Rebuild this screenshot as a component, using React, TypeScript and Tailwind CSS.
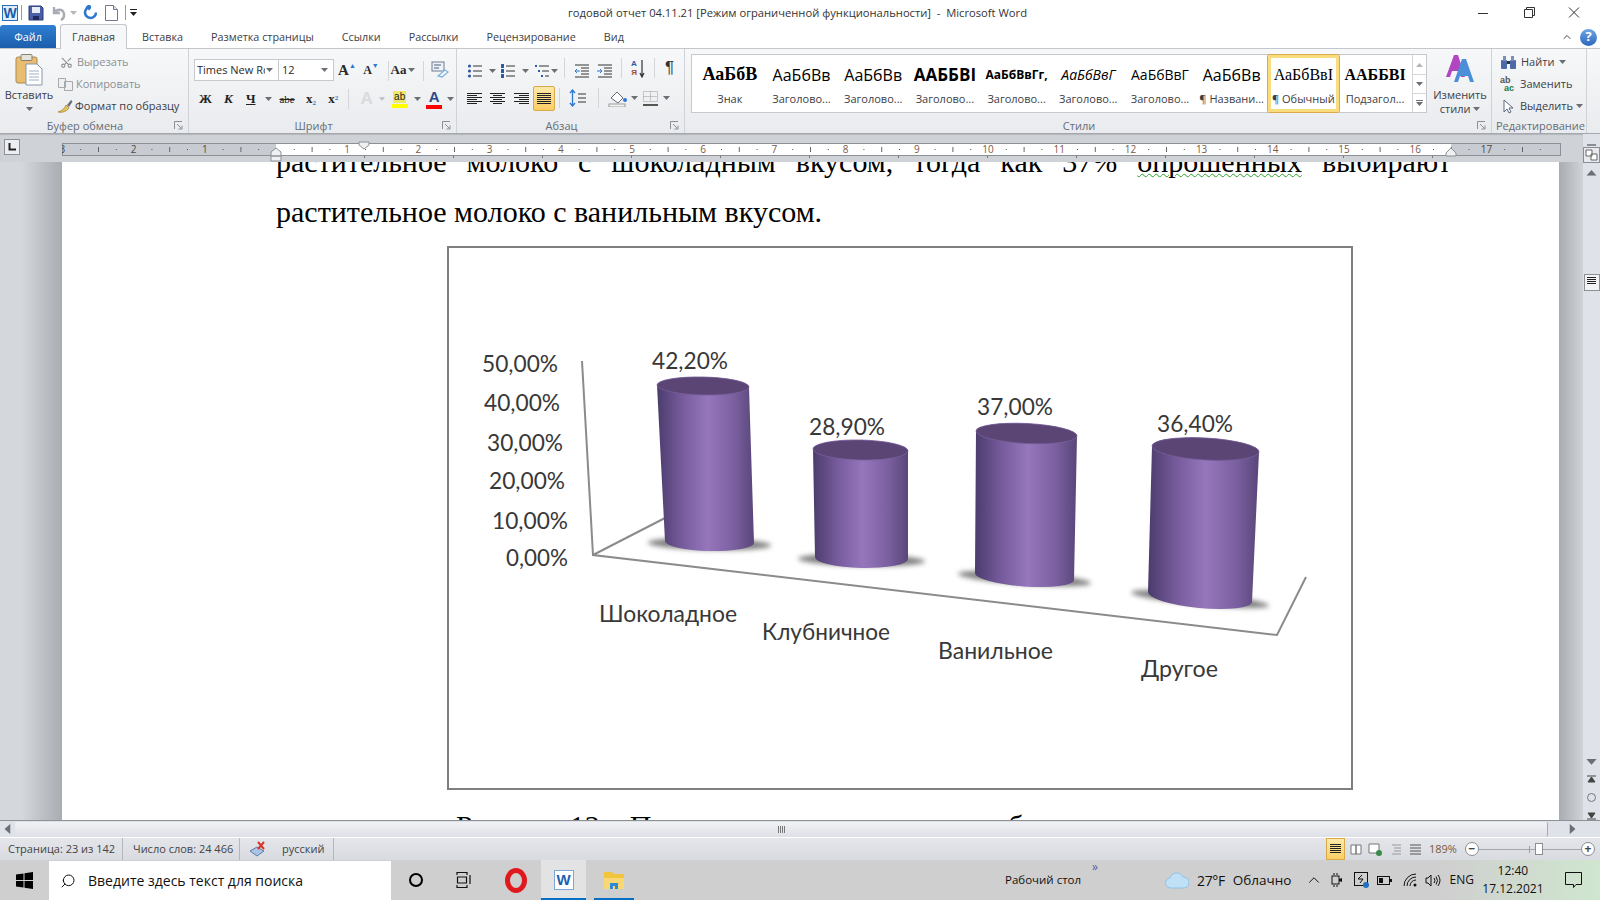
import React from 'react';
import { Scissors, Search, ChevronUp } from 'lucide-react';

const Caret = ({ className = '' }: { className?: string }) => (
  <svg width="7" height="4" viewBox="0 0 7 4" className={className}>
    <path d="M0 0h7L3.5 4z" fill="#6b6f75" />
  </svg>
);

const Launcher = () => (
  <svg width="9" height="9" viewBox="0 0 9 9" className="absolute right-[5px] bottom-[3px]">
    <path d="M0.5 8V0.5H8M3 3l4.5 4.5M8 4.5V8H4.5" fill="none" stroke="#8a8f96" />
  </svg>
);

const Sep = ({ className = '' }: { className?: string }) => <div className={`w-px bg-[#d3d5d9] ${className}`} />;

const Lines = ({ rows, w = 14 }: { rows: [number, number][]; w?: number }) => (
  <svg width={w} height="13" viewBox={`0 0 ${w} 13`}>
    {rows.map(([x, l], i) => (
      <rect key={i} x={x} y={i * 2 + 1} width={l} height="1" fill="#222" />
    ))}
  </svg>
);

const Group = ({ label, className, children }: { label: string; className: string; children: React.ReactNode }) => (
  <div className={`relative flex flex-col border-r border-[#cfd2d6] ${className}`}>
    <div className="h-[69px] overflow-visible">{children}</div>
    <div className="h-[16px] pr-[18px] text-center text-[11px] leading-[17px] text-[#666c75]">{label}</div>
    <Launcher />
  </div>
);

const TitleBar = () => (
  <div className="flex h-[25px] items-center bg-white text-[#333]">
    <div className="ml-[2px] flex h-[16px] w-[16px] items-center justify-center border border-[#2a6fb8] bg-[#dfeefb]">
      <span className="font-['Liberation_Sans',sans-serif] text-[14px] leading-none font-bold text-[#1d5aa8]">W</span>
    </div>
    <div className="ml-[3px] h-[15px] w-px bg-[#9a9a9a]" />
    <svg width="16" height="16" viewBox="0 0 16 16" className="ml-[6px]">
      <path d="M1 1h12l2 2v12H1z" fill="#4b5fa8" stroke="#2b3a78" />
      <rect x="4" y="2" width="8" height="6" fill="#e8ecf6" />
      <rect x="5" y="11" width="6" height="4" fill="#1f2a5c" />
    </svg>
    <svg width="16" height="16" viewBox="0 0 16 16" className="ml-[7px]">
      <path d="M3 2v6h6M3 8c2-4 9-5 10 1 .4 3-1 5-3 6" fill="none" stroke="#a9adb3" strokeWidth="2.4" />
    </svg>
    <Caret className="ml-[3px] opacity-50" />
    <svg width="14" height="15" viewBox="0 0 14 15" className="ml-[6px]">
      <path d="M13 7.5A5.5 5.5 0 1 1 8 2H5M7 0 4.500 2 7 4.500" fill="none" stroke="#2c78d0" strokeWidth="2.600" />
    </svg>
    <svg width="13" height="16" viewBox="0 0 13 16" className="ml-[8px]">
      <path d="M.5.500h8l4 4v11H.5z" fill="#fff" stroke="#6d7a8c" />
      <path d="M8.500.500v4h4" fill="#dbe3ee" stroke="#6d7a8c" />
    </svg>
    <div className="ml-[7px] h-[15px] w-px bg-[#9a9a9a]" />
    <svg width="8" height="8" viewBox="0 0 8 8" className="ml-[4px]">
      <rect width="7" height="1" y="0" fill="#222" />
      <path d="M0 3h7L3.500 7z" fill="#222" />
    </svg>
    <div className="flex-1 pt-[1px] pl-[430px] text-[11.2px] whitespace-pre">годовой отчет 04.11.21 [Режим ограниченной функциональности]  -  Microsoft Word</div>
    <svg width="104" height="14" viewBox="0 0 104 14" className="mr-[18px]">
      <path d="M0 7.500h10" stroke="#333" />
      <path d="M46.500 3.500h8v8h-8zM48.500 3.500v-2h8v8h-2" fill="none" stroke="#333" />
      <path d="M91 1.500l10 10M101 1.500l-10 10" stroke="#333" />
    </svg>
  </div>
);

const Tabs = () => (
  <div className="relative flex h-[24px] items-end bg-white text-[10.800px] text-[#3c4046]">
    <div className="flex h-[24px] w-[56px] items-center justify-center rounded-t-[3px] bg-gradient-to-b from-[#2f7fd3] to-[#1c5caa] text-white">Файл</div>
    <div className="z-10 ml-[4px] flex h-[25px] w-[67px] items-center justify-center rounded-t-[3px] border border-b-0 border-[#c3c6cb] bg-[#f6f7f8]">Главная</div>
    <div className="flex h-[24px] items-center gap-[28px] pl-[15px]">
      <span>Вставка</span>
      <span>Разметка страницы</span>
      <span>Ссылки</span>
      <span>Рассылки</span>
      <span>Рецензирование</span>
      <span>Вид</span>
    </div>
    <div className="ml-auto flex h-[24px] items-center gap-[7px] pr-[3px]">
      <ChevronUp size={12} color="#444" />
      <div className="flex h-[17px] w-[17px] items-center justify-center rounded-full bg-gradient-to-b from-[#6fa6e6] to-[#2b66bd] text-[13px] font-bold text-white">?</div>
    </div>
    <div className="absolute right-0 bottom-0 left-0 h-px bg-[#c3c6cb]" />
  </div>
);

const ClipboardGroup = () => (
  <Group label="Буфер обмена" className="w-[189px]">
    <div className="flex h-full">
      <div className="flex w-[58px] flex-col items-center pt-[5px]">
        <svg width="28" height="32" viewBox="0 0 28 32">
          <rect x="1" y="3" width="21" height="26" rx="2" fill="#e9bd70" stroke="#a88a52" />
          <rect x="6" y="0.500" width="11" height="6" rx="1" fill="#e6e3da" stroke="#85806f" />
          <path d="M11 10h11l5 5v16H11z" fill="#fff" stroke="#8b97a8" />
          <path d="M14 17h10M14 20h10M14 23h10M14 26h10" stroke="#9fb0c6" />
        </svg>
        <span className="mt-[1px] text-[11px] leading-[16px] text-[#3c4046]">Вставить</span>
        <Caret className="mt-[4px]" />
      </div>
      <div className="flex flex-col pt-[2px] text-[11px] leading-[22px]">
        <div className="flex items-center text-[#8d9096]">
          <Scissors size={13} color="#8d9096" className="mr-[4px] ml-[2px] -rotate-90" />
          Вырезать
        </div>
        <div className="flex items-center text-[#8d9096]">
          <svg width="15" height="13" viewBox="0 0 15 13" className="mr-[3px]">
            <path d="M.5.500h7v9h-7zM6.500 3.500h8v9h-8z" fill="#eef0f2" stroke="#a6a9ae" />
          </svg>
          Копировать
        </div>
        <div className="flex items-center text-[#3c4046]">
          <svg width="16" height="14" viewBox="0 0 16 14" className="mr-[2px] -ml-[1px]">
            <path d="M1 13c4-1 7-4 8-7l3 3c-2 3-6 5-11 4z" fill="#e6c35c" stroke="#9a7c2e" strokeWidth=".7" />
            <path d="M10 6l4-5 1.500 1.500L12 8z" fill="#6a6f78" />
          </svg>
          Формат по образцу
        </div>
      </div>
    </div>
  </Group>
);

const FontGroup = () => (
  <Group label="Шрифт" className="w-[268px]">
    <div className="flex h-[32px] items-end pl-[5px] text-[#2b2b2b]">
      <div className="flex h-[22px] w-[85px] items-center justify-between border border-[#c6c9cd] bg-white pr-[5px] pl-[2px] text-[11px]">
        <span className="w-[68px] overflow-hidden whitespace-nowrap">Times New Ro</span>
        <Caret />
      </div>
      <div className="flex h-[22px] w-[55px] items-center justify-between border border-l-0 border-[#c6c9cd] bg-white pr-[5px] pl-[3px] text-[11px]">
        12
        <Caret />
      </div>
      <div className="flex h-[22px] w-[26px] items-center justify-center font-['Liberation_Serif',serif] text-[15px] font-bold">A<span className="-mt-[8px] text-[7px] text-[#2c78d0]">▲</span></div>
      <div className="flex h-[22px] w-[22px] items-center justify-center font-['Liberation_Serif',serif] text-[12px] font-bold">A<span className="-mt-[8px] text-[7px] text-[#2c78d0]">▼</span></div>
      <Sep className="ml-[6px] h-[20px]" />
      <div className="flex h-[22px] w-[28px] items-center justify-center gap-[2px] font-['Liberation_Serif',serif] text-[13px] font-bold">Aa<Caret /></div>
      <Sep className="ml-[6px] h-[20px]" />
      <svg width="18" height="17" viewBox="0 0 18 17" className="mb-[3px] ml-[7px]">
        <rect x="1" y="1" width="12" height="9" fill="#eef3fa" stroke="#6c7a8e" />
        <path d="M3 4h7M3 7h5" stroke="#4a5a70" />
        <path d="M7 15l7-6 3 2-6 5z" fill="#fff" stroke="#7fb2dc" strokeWidth="1.300" />
      </svg>
    </div>
    <div className="mt-[7px] flex h-[22px] items-center pl-[5px] font-['Liberation_Serif',serif] text-[13px] font-bold text-[#222]">
      <span className="w-[23px] text-center">Ж</span>
      <span className="w-[23px] text-center italic">К</span>
      <span className="w-[22px] text-center underline">Ч</span>
      <span className="flex w-[14px] justify-center"><Caret /></span>
      <span className="w-[23px] text-center text-[11px] font-normal line-through">abe</span>
      <span className="w-[25px] text-center">x<sub className="text-[7px] text-[#2c78d0]">2</sub></span>
      <span className="w-[20px] text-center">x<sup className="text-[7px] text-[#2c78d0]">2</sup></span>
      <Sep className="mx-[5px] h-[20px]" />
      <span className="w-[25px] text-center font-['Liberation_Sans',sans-serif] text-[17px] text-[#d9dbde]">A</span>
      <span className="flex w-[6px] justify-center opacity-40"><Caret /></span>
      <span className="ml-[6px] flex w-[17px] flex-col items-center font-['Liberation_Sans',sans-serif] text-[10px] leading-[12px] font-normal">
        <span className="bg-[#efe96a] px-[1px]">ab</span>
        <span className="mt-[1px] h-[4px] w-[16px] bg-[#ffff00]" />
      </span>
      <span className="ml-[3px] flex w-[13px] justify-center"><Caret /></span>
      <span className="ml-[2px] flex w-[16px] flex-col items-center font-['Liberation_Sans',sans-serif] text-[15px] leading-[14px] text-[#2a4a8a]">
        A
        <span className="mt-[1px] h-[4px] w-[16px] bg-[#ff0000]" />
      </span>
      <span className="ml-[3px] flex w-[11px] justify-center"><Caret /></span>
    </div>
  </Group>
);

const ListIcon = ({ kind }: { kind: 'b' | 'n' | 'm' }) => (
  <svg width="16" height="14" viewBox="0 0 16 14">
    {kind === 'm' ? (
      <>
        <path d="M5 2h10M8 7h7M11 12h4" stroke="#333" />
        <rect x="1" y="1" width="2" height="2" fill="#2c5aa8" />
        <rect x="4" y="6" width="2" height="2" fill="#2c5aa8" />
        <rect x="7" y="11" width="2" height="2" fill="#2c5aa8" />
      </>
    ) : (
      <>
        <path d="M6 2h9M6 7h9M6 12h9" stroke="#333" />
        {[2, 7, 12].map((y) =>
          kind === 'b' ? (
            <circle key={y} cx="2.500" cy={y} r="1.600" fill="#2c5aa8" />
          ) : (
            <rect key={y} x="1" y={y - 2} width="3" height="4" fill="#2c5aa8" />
          )
        )}
      </>
    )}
  </svg>
);

const IndentIcon = ({ dir }: { dir: 'l' | 'r' }) => (
  <svg width="16" height="14" viewBox="0 0 16 14">
    <path d="M1 1h14M7 4h8M7 7h8M7 10h8M1 13h14" stroke="#333" />
    {dir === 'l' ? (
      <path d="M6 7H1l2-2M1 7l2 2" fill="none" stroke="#2c78d0" />
    ) : (
      <path d="M0 7h5L3 5M5 7 3 9" fill="none" stroke="#2c78d0" />
    )}
  </svg>
);

const ParagraphGroup = () => (
  <Group label="Абзац" className="w-[228px]">
    <div className="flex h-[32px] items-end pb-[3px] pl-[10px]">
      <ListIcon kind="b" />
      <Caret className="mb-[5px] ml-[6px]" />
      <div className="ml-[4px]"><ListIcon kind="n" /></div>
      <Caret className="mb-[5px] ml-[6px]" />
      <div className="ml-[5px]"><ListIcon kind="m" /></div>
      <Caret className="mb-[5px] ml-[1px]" />
      <Sep className="ml-[6px] h-[20px]" />
      <div className="ml-[9px]"><IndentIcon dir="l" /></div>
      <div className="ml-[7px]"><IndentIcon dir="r" /></div>
      <Sep className="ml-[8px] h-[20px]" />
      <div className="ml-[7px] flex h-[19px] w-[10px] flex-col text-center font-['Liberation_Sans',sans-serif] text-[8px] leading-[9px] font-bold">
        <span className="text-[#2c5aa8]">A</span>
        <span className="text-[#a04a3a]">Я</span>
      </div>
      <svg width="6" height="18" viewBox="0 0 6 18">
        <path d="M3 0v16M1 13l2 4 2-4" fill="none" stroke="#333" strokeWidth="1.200" />
      </svg>
      <Sep className="ml-[9px] h-[20px]" />
      <span className="ml-[10px] font-['Liberation_Sans',sans-serif] text-[17px] leading-[20px] text-[#333]">¶</span>
    </div>
    <div className="mt-[4px] flex h-[26px] items-center pl-[10px]">
      <Lines w={15} rows={[[0, 15], [0, 10], [0, 15], [0, 10], [0, 15], [0, 10]]} />
      <div className="ml-[8px]"><Lines w={15} rows={[[0, 15], [3, 9], [0, 15], [3, 9], [0, 15], [3, 9]]} /></div>
      <div className="ml-[9px]"><Lines w={15} rows={[[0, 15], [5, 10], [0, 15], [5, 10], [0, 15], [5, 10]]} /></div>
      <div className="ml-[4px] flex h-[25px] w-[22px] items-center justify-center rounded-[2px] border border-[#d9a94a] bg-gradient-to-b from-[#fde9a8] to-[#fbce62]">
        <Lines w={14} rows={[[0, 14], [0, 14], [0, 14], [0, 14], [0, 14], [0, 14]]} />
      </div>
      <Sep className="ml-[4px] h-[20px]" />
      <svg width="22" height="18" viewBox="0 0 22 18" className="ml-[9px]">
        <path d="M3.500 1v16M1 4l2.500-3L6 4M1 14l2.500 3L6 14" fill="none" stroke="#2c78d0" strokeWidth="1.300" />
        <path d="M9 5h8M9 9h8M9 13h8" stroke="#333" />
      </svg>
      <Sep className="ml-[7px] h-[20px]" />
      <svg width="22" height="18" viewBox="0 0 22 18" className="ml-[9px]">
        <path d="M3 9l6-6 6 6-5 5z" fill="#fff" stroke="#5f6b7a" />
        <circle cx="17" cy="11" r="2" fill="#2c78d0" />
        <rect x="1" y="15" width="16" height="3" fill="#f4f4f4" stroke="#9a9a9a" />
      </svg>
      <Caret className="ml-[1px]" />
      <svg width="16" height="15" viewBox="0 0 16 15" className="ml-[5px]">
        <path d="M.5.500h14v10h-14zM7.500.500v10M.5 5.500h14" fill="none" stroke="#9a9a9a" strokeDasharray="1 1" />
        <path d="M0 14h15" stroke="#222" strokeWidth="1.500" />
      </svg>
      <Caret className="ml-[4px]" />
    </div>
  </Group>
);

const styles: { sample: string; label: string; cls: string }[] = [
  { sample: 'АаБбВ', label: 'Знак', cls: "font-['Liberation_Serif',serif] text-[18px] font-bold" },
  { sample: 'АаБбВв', label: 'Заголово...', cls: 'text-[16px]' },
  { sample: 'АаБбВв', label: 'Заголово...', cls: 'text-[16px]' },
  { sample: 'ААББВI', label: 'Заголово...', cls: 'text-[17px] font-bold' },
  { sample: 'АаБбВвГг,', label: 'Заголово...', cls: 'text-[12px] font-bold' },
  { sample: 'АаБбВвГ', label: 'Заголово...', cls: 'text-[14px] italic' },
  { sample: 'АаБбВвГ', label: 'Заголово...', cls: 'text-[14px]' },
  { sample: 'АаБбВв', label: '¶ Названи...', cls: 'text-[16px]' },
  { sample: 'АаБбВвI', label: '¶ Обычный', cls: "font-['Liberation_Serif',serif] text-[16px]" },
  { sample: 'ААББВI', label: 'Подзагол...', cls: "font-['Liberation_Serif',serif] text-[16px] font-bold" },
];

const StylesGroup = () => (
  <Group label="Стили" className="w-[807px]">
    <div className="flex h-full">
      <div className="mt-[5px] ml-[6px] flex h-[59px] w-[736px] border border-[#c6c9cd] bg-white pl-[2px]">
        {styles.map((s, i) => (
          <div
            key={i}
            className={`flex w-[71.700px] flex-col items-center overflow-hidden ${
              i === 8 ? 'rounded-[2px] shadow-[inset_0_0_0_3px_#f8dc7e,0_0_0_1px_#dca94c]' : ''
            }`}
          >
            <div className={`flex h-[36px] items-center px-[3px] pt-[3px] whitespace-nowrap text-black ${s.cls}`}>{s.sample}</div>
            <div className="text-[11px] leading-[16px] whitespace-nowrap text-[#3c4046]">{s.label}</div>
          </div>
        ))}
        <div className="ml-auto flex w-[14px] flex-col border-l border-[#d4d6da] text-[#9a9ea4]">
          <div className="flex h-[19px] items-center justify-center"><Caret className="rotate-180 opacity-50" /></div>
          <div className="flex h-[20px] items-center justify-center border-y border-[#d4d6da]"><Caret /></div>
          <div className="flex h-[18px] flex-col items-center justify-center gap-[1px]"><div className="h-px w-[7px] bg-[#6b6f75]" /><Caret /></div>
        </div>
      </div>
      <div className="ml-[3px] flex w-[60px] flex-col items-center pt-[4px]">
        <svg width="32" height="31" viewBox="0 0 32 31">
          <path d="M2 24 10 2h4l7 22h-4l-2-6H8l-2 6z" fill="#b146c0" />
          <path d="M10 29 18 6h4l8 23h-4l-2-6h-8l-2 6z" fill="#4d8ed8" />
        </svg>
        <span className="mt-[4px] text-center text-[11px] leading-[14px] text-[#3c4046]">
          Изменить
          <br />
          стили <Caret className="mb-[2px] inline" />
        </span>
      </div>
    </div>
  </Group>
);

const EditingGroup = () => (
  <div className="relative flex w-[95px] flex-col border-r border-[#cfd2d6]">
    <div className="flex h-[69px] flex-col pt-[2px] pl-[8px] text-[11px] leading-[22px] text-[#3c4046]">
      <div className="flex items-center gap-[4px]">
        <svg width="17" height="15" viewBox="0 0 17 15">
          <rect x="1" y="5" width="6" height="9" rx="1" fill="#4a6aa8" />
          <rect x="10" y="5" width="6" height="9" rx="1" fill="#4a6aa8" />
          <rect x="3" y="1" width="3" height="5" fill="#7d8fb5" />
          <rect x="11" y="1" width="3" height="5" fill="#7d8fb5" />
          <rect x="7" y="6" width="3" height="3" fill="#333" />
        </svg>
        Найти
        <Caret className="ml-[1px]" />
      </div>
      <div className="flex items-center gap-[3px]">
        <span className="flex h-[17px] w-[17px] flex-col font-['Liberation_Sans',sans-serif] text-[9px] leading-[8px] font-bold">
          <span className="text-[#555]">ab</span>
          <span className="pl-[4px] text-[#1a7a4a]">ac</span>
        </span>
        Заменить
      </div>
      <div className="flex items-center gap-[4px]">
        <svg width="16" height="15" viewBox="0 0 16 15">
          <path d="M4 1v12l3-3 2 4 2-1-2-4h4z" fill="#fff" stroke="#5a6a80" />
        </svg>
        Выделить
        <Caret className="-ml-[1px]" />
      </div>
    </div>
    <div className="h-[16px] pl-[3px] text-center text-[11px] leading-[17px] whitespace-nowrap text-[#666c75]">Редактирование</div>
  </div>
);

const Ribbon = () => (
  <div className="flex h-[85px] border-b border-[#a4a7ac] bg-gradient-to-b from-[#f7f8f9] to-[#e9ebee]">
    <ClipboardGroup />
    <FontGroup />
    <ParagraphGroup />
    <StylesGroup />
    <EditingGroup />
  </div>
);

const unit = 71.2;
const zero = 214;
const rulerNums = Array.from({ length: 21 }, (_, i) => i - 3);

const Ruler = () => (
  <div className="flex h-[28px] shrink-0 items-start bg-[#cfd2d7] shadow-[inset_0_1px_1px_#b3b6bb]">
    <div className="mt-[5px] ml-[4px] flex h-[16px] w-[16px] items-center justify-center border border-[#8c9096] bg-[#eceef1]">
      <svg width="8" height="8" viewBox="0 0 8 8"><path d="M1.500 0v6.500H8" fill="none" stroke="#222" strokeWidth="2" /></svg>
    </div>
    <svg width="1510" height="28" viewBox="0 0 1510 28" className="ml-[42px] font-['Open_Sans',sans-serif]">
      <rect x=".5" y="9.500" width="1498" height="12" fill="#c8ccd2" stroke="#8d9196" />
      <rect x={zero} y="10" width="1175" height="11" fill="#fff" />
      {rulerNums.map((n) => {
        const x = zero + n * unit;
        return (
          <g key={n}>
            {n !== 0 && n <= 17 && (
              <text x={x} y="19" textAnchor="middle" fontSize="10" fill={n > 0 && n < 17 ? '#7a5a4a' : '#4a4a4a'}>
                {Math.abs(n)}
              </text>
            )}
            <rect x={x + unit / 4} y="15" width="1" height="1" fill="#555" />
            <rect x={x + unit / 2} y="13" width="1" height="5" fill="#666" />
            <rect x={x + (unit * 3) / 4} y="15" width="1" height="1" fill="#555" />
          </g>
        );
      })}
      {[0, 1, 2, 3, 4, 5, 6, 7, 8, 9, 10, 11, 12].map((i) => (
        <rect key={i} x={302 + i * 89} y="22" width="1" height="2" fill="#777" />
      ))}
      <path d="M297 8h10v3l-5 4-5-4z" fill="#eef0f2" stroke="#8d9196" />
      <path d="M209 22v-4l5-4 5 4v4zM209 22h10v5h-10z" fill="#eef0f2" stroke="#8d9196" />
      <path d="M1384 22v-3l5-5 5 5v3z" fill="#eef0f2" stroke="#8d9196" />
    </svg>
  </div>
);

type Pt = [number, number];

const Cylinder = ({ tl, tr, bl, br, ry, id }: { tl: Pt; tr: Pt; bl: Pt; br: Pt; ry: number; id: string }) => {
  const rx = Math.hypot(tr[0] - tl[0], tr[1] - tl[1]) / 2;
  const rot = (Math.atan2(tr[1] - tl[1], tr[0] - tl[0]) * 180) / Math.PI;
  const rxb = Math.hypot(br[0] - bl[0], br[1] - bl[1]) / 2;
  const rotb = (Math.atan2(br[1] - bl[1], br[0] - bl[0]) * 180) / Math.PI;
  const cx = (bl[0] + br[0]) / 2;
  const cy = (bl[1] + br[1]) / 2 + 2;
  return (
    <g>
      <ellipse cx={cx} cy={cy} rx={rxb + 17} ry={6} transform={`rotate(${rotb} ${cx} ${cy})`} fill="#555" opacity=".75" filter="url(#soft)" />
      <linearGradient id={id} x1="0" x2="1" y1="0" y2="0">
        <stop offset="0" stopColor="#4b3c6c" />
        <stop offset=".25" stopColor="#755a9b" />
        <stop offset=".52" stopColor="#9676bc" />
        <stop offset=".8" stopColor="#7a5f9f" />
        <stop offset="1" stopColor="#584679" />
      </linearGradient>
      <path d={`M${tl} L${bl} A${rxb} ${ry} ${rotb} 0 0 ${br} L${tr} A${rx} ${ry} ${rot} 0 0 ${tl}Z`} fill={`url(#${id})`} />
      <path d={`M${tl} A${rx} ${ry} ${rot} 0 1 ${tr} A${rx} ${ry} ${rot} 0 1 ${tl}Z`} fill="#5a4574" stroke="#775f9a" strokeWidth=".8" />
    </g>
  );
};

const labelText: { x: number; y: number; t: string; w: number }[] = [
  { x: 482, y: 372, t: '50,00%', w: 76 },
  { x: 484, y: 411, t: '40,00%', w: 76 },
  { x: 487, y: 451, t: '30,00%', w: 76 },
  { x: 489, y: 489, t: '20,00%', w: 76 },
  { x: 492, y: 529, t: '10,00%', w: 76 },
  { x: 506, y: 566, t: '0,00%', w: 62 },
  { x: 652, y: 369, t: '42,20%', w: 76 },
  { x: 809, y: 435, t: '28,90%', w: 76 },
  { x: 977, y: 415, t: '37,00%', w: 76 },
  { x: 1157, y: 432, t: '36,40%', w: 76 },
  { x: 599, y: 622, t: 'Шоколадное', w: 138 },
  { x: 762, y: 640, t: 'Клубничное', w: 128 },
  { x: 938, y: 659, t: 'Ванильное', w: 115 },
  { x: 1141, y: 677, t: 'Другое', w: 77 },
];

const Chart = () => (
  <svg viewBox="449 249 902 538" className="h-full w-full font-['Lato',sans-serif]">
    <defs>
      <filter id="soft" x="-30%" y="-80%" width="160%" height="260%">
        <feGaussianBlur stdDeviation="2.500" />
      </filter>
    </defs>
    <path d="M582 361 593 555 1277 635 1306 577M593 555 665 518" fill="none" stroke="#8b8b8b" strokeWidth="2" />
    <Cylinder id="c1" tl={[657, 385]} tr={[749, 387]} bl={[665, 541]} br={[754, 543]} ry={9} />
    <Cylinder id="c2" tl={[813, 449]} tr={[908, 451]} bl={[815, 557]} br={[908, 559]} ry={10} />
    <Cylinder id="c3" tl={[976, 431]} tr={[1077, 436]} bl={[975, 573]} br={[1074, 580]} ry={10} />
    <Cylinder id="c4" tl={[1152, 446]} tr={[1259, 452]} bl={[1148, 592]} br={[1252, 602]} ry={11} />
    {labelText.map((l) => (
      <text key={l.t} x={l.x} y={l.y} fontSize="23" fill="#383838" textLength={l.w} lengthAdjust="spacingAndGlyphs">
        {l.t}
      </text>
    ))}
  </svg>
);

const Page = () => (
  <div className="min-w-0 flex-1 overflow-hidden bg-white pr-[108px] pl-[214px] font-['Liberation_Serif',serif] text-[30px] leading-[50px] text-black">
    <div className="-mt-[25px] whitespace-nowrap [text-align-last:justify] [text-align:justify]">
      растительное молоко с шоколадным вкусом, тогда как 37% <span className="underline decoration-[#2aa02a] decoration-wavy decoration-1">опрошенных</span> выбирают
    </div>
    <div className="whitespace-nowrap">растительное молоко с ванильным вкусом.</div>
    <div className="mt-[9px] ml-[171px] h-[544px] w-[906px] border-2 border-[#7f7f7f] bg-white">
      <Chart />
    </div>
    <div className="mt-[11px] ml-[180px] whitespace-nowrap">Рисунок 12 – Предпочтения вкусов у потребителя</div>
  </div>
);

const VScroll = () => (
  <div className="flex w-[17px] shrink-0 flex-col items-center bg-[#dfe2e9]">
    <div className="mt-[10px] h-[2px] w-[9px] bg-[#8a8e94]" />
    <div className="mt-px flex h-[16px] w-[17px] items-center justify-center border border-[#8a8e94] bg-[#e7e9ee]">
      <svg width="13" height="12" viewBox="0 0 13 12">
        <path d="M1 1h6v6H1zM6 5h6v6H6z" fill="#fff" stroke="#666" />
      </svg>
    </div>
    <Caret className="mt-[8px] scale-150 rotate-180" />
    <div className="mt-[100px] flex h-[17px] w-[16px] items-center justify-center border border-[#8d9196] bg-[#f2f3f5]">
      <Lines w={9} rows={[[0, 9], [0, 9], [0, 9], [0, 9], [0, 0], [0, 0]]} />
    </div>
    <Caret className="mt-[469px] scale-150" />
    <div className="mt-[11px] flex flex-col items-center gap-[9px] text-[#555]">
      <svg width="9" height="9" viewBox="0 0 9 9"><path d="M0 1h9M1 7h7L4.500 2z" stroke="#444" fill="#444" /></svg>
      <div className="h-[9px] w-[9px] rounded-full border border-[#777]" />
      <svg width="9" height="9" viewBox="0 0 9 9"><path d="M0 8h9M1 2h7L4.500 7z" stroke="#444" fill="#444" /></svg>
    </div>
  </div>
);

const HScroll = () => (
  <div className="flex h-[17px] shrink-0 items-center border-t border-[#8d9196] bg-[#dfe2e9]">
    <Caret className="ml-[4px] scale-150 rotate-90" />
    <div className="ml-[4px] flex h-[15px] w-[1533px] items-center justify-center rounded-[2px] border-r border-[#a7abb1] bg-gradient-to-b from-[#f1f2f5] to-[#dde0e6]">
      <svg width="7" height="7" viewBox="0 0 7 7"><path d="M.5 0v7M2.500 0v7M4.500 0v7M6.500 0v7" stroke="#777" /></svg>
    </div>
    <Caret className="ml-[21px] scale-150 -rotate-90" />
  </div>
);

const StatusBar = () => (
  <div className="mt-px flex h-[22px] shrink-0 items-center bg-gradient-to-b from-[#e4e6ea] to-[#d8dbe0] text-[11px] text-[#444]">
    <div className="flex h-full w-[123px] items-center border-r border-[#b4b7bc] pl-[8px]">Страница: 23 из 142</div>
    <div className="flex h-full w-[117px] items-center border-r border-[#b4b7bc] pl-[10px]">Число слов: 24 466</div>
    <div className="flex h-full w-[94px] items-center border-r border-[#b4b7bc] pl-[9px]">
      <svg width="18" height="18" viewBox="0 0 18 18">
        <path d="M1 11l7-4 7 4-7 5z" fill="#a9c3e6" stroke="#5f7fa8" />
        <path d="M9 2l6 7M15 2l-6 7" stroke="#d8362a" strokeWidth="2" />
      </svg>
      <span className="ml-[15px]">русский</span>
    </div>
    <div className="ml-auto flex h-[22px] items-center pr-[5px]">
      <div className="flex h-[22px] w-[19px] items-center justify-center border border-[#d9a94a] bg-gradient-to-b from-[#fde9a8] to-[#fbce62]">
        <Lines w={11} rows={[[0, 11], [0, 11], [0, 11], [0, 11], [0, 11], [0, 0]]} />
      </div>
      <svg width="76" height="13" viewBox="0 0 76 13" className="ml-[3px]">
        <path d="M3 2h5v9H3zM8 2h5v9H8z" fill="#fff" stroke="#777" />
        <path d="M21 1h10v9H21z" fill="#fff" stroke="#777" />
        <circle cx="31" cy="10" r="3" fill="#3a8a4a" />
        <path d="M44 2h9M46 5h7M46 8h7M44 11h9" stroke="#999" />
        <path d="M62 2h11M62 5h11M62 8h11M62 11h11" stroke="#555" />
      </svg>
      <span className="ml-[5px] w-[28px] text-[#7a5a3a]">189%</span>
      <div className="ml-[8px] flex h-[14px] w-[14px] items-center justify-center rounded-full border border-[#8a8e94] bg-white text-[12px] leading-none font-bold">−</div>
      <div className="relative flex h-px w-[102px] items-center bg-[#a4a8ae]">
        <div className="absolute left-[50px] h-[7px] w-px bg-[#9a9ea4]" />
        <div className="absolute left-[56px] h-[12px] w-[8px] border border-[#8a8e94] bg-white" />
      </div>
      <div className="flex h-[14px] w-[14px] items-center justify-center rounded-full border border-[#8a8e94] bg-white text-[12px] leading-none font-bold">+</div>
    </div>
  </div>
);

const Taskbar = () => (
  <div className="flex h-[40px] shrink-0 items-center bg-gradient-to-r from-[#cfcfcf] from-90% to-[#cfe6cf] text-[#111]">
    <div className="flex w-[49px] justify-center">
      <svg width="17" height="17" viewBox="0 0 17 17">
        <path d="M0 2.500 7.500 1.500v6.500H0zM8.500 1.300 17 0v8H8.500zM0 9h7.500v6.500L0 14.500zM8.500 9H17v8l-8.500-1.300z" fill="#000" />
      </svg>
    </div>
    <div className="flex h-[39px] w-[342px] items-center self-end bg-white pl-[11px] text-[14px]">
      <Search size={16} strokeWidth={1.5} className="-scale-x-100" />
      <span className="ml-[12px]">Введите здесь текст для поиска</span>
    </div>
    <div className="ml-[18px] h-[14px] w-[14px] rounded-full border-2 border-black" />
    <svg width="18" height="16" viewBox="0 0 18 16" className="ml-[31px]">
      <path d="M3 3V.5h10V3M3 13v2.500h10V13M3.500 5h9v6h-9zM16 3v9" fill="none" stroke="#111" strokeWidth="1.200" />
    </svg>
    <div className="ml-[33px] h-[25px] w-[22px] rounded-[50%] border-[5px] border-[#e0191f]" />
    <div className="relative ml-[14px] flex h-[40px] w-[45px] items-center justify-center bg-[#e3e3e3]">
      <div className="flex h-[20px] w-[20px] items-center justify-center border border-[#7ea6d8] bg-white font-['Liberation_Sans',sans-serif] text-[15px] font-bold text-[#1f5fb0]">W</div>
      <div className="absolute right-0 bottom-0 left-0 h-[2px] bg-[#0a6fc2]" />
    </div>
    <div className="relative ml-[8px] flex h-[40px] w-[40px] items-center justify-center">
      <svg width="22" height="20" viewBox="0 0 22 20">
        <path d="M1 2h8l2 2h10v5H1z" fill="#f3c53f" />
        <path d="M1 8h20v11H1z" fill="#f8d774" />
        <path d="M7 13h8v6h-3v-3h-2v3H7z" fill="#2a8ad4" />
      </svg>
      <div className="absolute right-0 bottom-0 left-0 h-[2px] bg-[#0a6fc2]" />
    </div>
    <div className="ml-[371px] w-[100px] text-[11.500px]">Рабочий стол</div>
    <span className="-mt-[26px] -ml-[13px] w-[12px] text-[12px] leading-none text-[#5a5a9a]">»</span>
    <svg width="24" height="17" viewBox="0 0 24 17" className="ml-[61px]">
      <path d="M6 16a5 5 0 0 1-1-10 7 7 0 0 1 13-1 5.500 5.500 0 0 1 1 11z" fill="#bfe0f5" stroke="#8fc3e8" />
    </svg>
    <span className="ml-[8px] text-[14px] tracking-tight">27°F</span>
    <span className="ml-[8px] text-[13.500px]">Облачно</span>
    <ChevronUp size={18} strokeWidth={1.300} className="ml-[14px]" />
    <svg width="12" height="16" viewBox="0 0 12 16" className="ml-[8px]">
      <path d="M2 2h6M2 14h6" stroke="#111" strokeDasharray="2 1" />
      <rect x="1" y="4" width="7" height="8" fill="none" stroke="#111" />
      <path d="M8 7l3-1v4L8 9" fill="#111" />
    </svg>
    <svg width="16" height="17" viewBox="0 0 16 17" className="ml-[11px]">
      <rect x=".5" y=".5" width="13" height="13" fill="none" stroke="#111" />
      <path d="M8 3 4 7h5l-3 4" fill="none" stroke="#111" />
      <circle cx="12" cy="13" r="3" fill="#1f6fc2" />
    </svg>
    <svg width="15" height="9" viewBox="0 0 15 9" className="ml-[7px]">
      <rect x=".5" y=".5" width="12" height="8" fill="none" stroke="#111" />
      <rect x="2" y="2" width="4" height="5" fill="#111" />
      <rect x="13" y="3" width="2" height="3" fill="#111" />
    </svg>
    <svg width="15" height="14" viewBox="0 0 15 14" className="ml-[11px]">
      <path d="M1 13A12 12 0 0 1 13 1M4 13a9 9 0 0 1 9-9M7 13a6 6 0 0 1 6-6" fill="none" stroke="#111" />
      <circle cx="12" cy="12" r="1.500" fill="#111" />
    </svg>
    <svg width="16" height="15" viewBox="0 0 16 15" className="ml-[7px]">
      <path d="M1 5h2l3-3v11l-3-3H1zM9 5q2 2.500 0 5M11 3.500q3 4 0 8M13 2q4 5 0 11" fill="none" stroke="#111" />
    </svg>
    <span className="ml-[8px] text-[12px]">ENG</span>
    <div className="ml-[8px] flex w-[62px] flex-col items-center text-[12px] leading-[18px]">
      <span>12:40</span>
      <span>17.12.2021</span>
    </div>
    <svg width="17" height="17" viewBox="0 0 17 17" className="ml-[21px]">
      <path d="M.5.500h16v12H11l-2.500 3V12.500H.5z" fill="none" stroke="#111" />
    </svg>
  </div>
);

export default function App() {
  return (
    <div className="flex h-[900px] w-[1600px] flex-col overflow-hidden bg-white font-['Open_Sans',sans-serif]">
      <TitleBar />
      <Tabs />
      <Ribbon />
      <div className="flex min-h-0 flex-1">
        <div className="flex min-w-0 flex-1 flex-col">
          <Ruler />
          <div className="flex min-h-0 flex-1">
            <div className="w-[62px] shrink-0 bg-gradient-to-r from-[#d4d7dc] from-35% to-[#a9adb2]" />
            <Page />
            <div className="w-[24px] shrink-0 bg-gradient-to-r from-[#a9adb2] to-[#d0d3d8]" />
          </div>
        </div>
        <VScroll />
      </div>
      <HScroll />
      <StatusBar />
      <Taskbar />
    </div>
  );
}
